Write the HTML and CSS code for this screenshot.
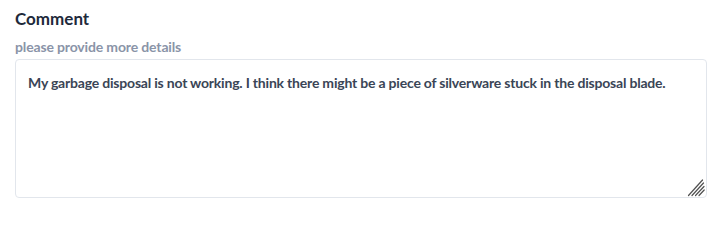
FILE: index.html
```html
<!DOCTYPE html>
<html lang="en">
<head>
<meta charset="utf-8">
<link rel="stylesheet" href="styles.css">
</head>
<body>
<div class="field">
  <label class="field-label" for="comment">Comment</label>
  <div class="field-hint">please provide more details</div>
  <div class="input-wrap">
    <textarea id="comment" class="field-input">My garbage disposal is not working. I think there might be a piece of silverware stuck in the disposal blade.</textarea>
    <svg class="grip" width="19" height="19" viewBox="0 0 19 19" aria-hidden="true">
      <g stroke="#505050" stroke-width="1.2" stroke-linecap="round">
        <line x1="1.5" y1="17.5" x2="15.5" y2="2"/>
        <line x1="5" y1="17.5" x2="16.5" y2="5"/>
        <line x1="8.5" y1="17.5" x2="17" y2="8.5"/>
        <line x1="12" y1="17.5" x2="17.2" y2="12"/>
      </g>
    </svg>
  </div>
</div>
</body>
</html>
```
FILE: styles.css
```css
html, body {
  margin: 0;
  padding: 0;
  background: #ffffff;
}
body {
  font-family: Lato, "Noto Sans", sans-serif;
}
.field {
  display: flex;
  flex-direction: column;
  align-items: flex-start;
  padding: 8px 11px 0 15px;
}
.field-label {
  font-size: 17px;
  font-weight: 700;
  color: #1e2a3b;
  line-height: 22px;
}
.field-hint {
  margin-top: 8px;
  font-size: 14px;
  font-weight: 700;
  letter-spacing: -0.15px;
  color: #8a94a8;
  line-height: 18px;
}
.input-wrap {
  position: relative;
  margin-top: 3px;
}
.field-input {
  display: block;
  box-sizing: border-box;
  height: 139px;
  width: 692px;
  padding: 13px 12px;
  border: 1px solid #e2e6ec;
  border-radius: 4px;
  font-family: Lato, "Noto Sans", sans-serif;
  font-size: 14px;
  font-weight: 700;
  letter-spacing: -0.2px;
  color: #3a4556;
  line-height: 20px;
  resize: none;
  outline: none;
}
.grip {
  position: absolute;
  right: 1px;
  bottom: 1px;
  pointer-events: none;
}
```
